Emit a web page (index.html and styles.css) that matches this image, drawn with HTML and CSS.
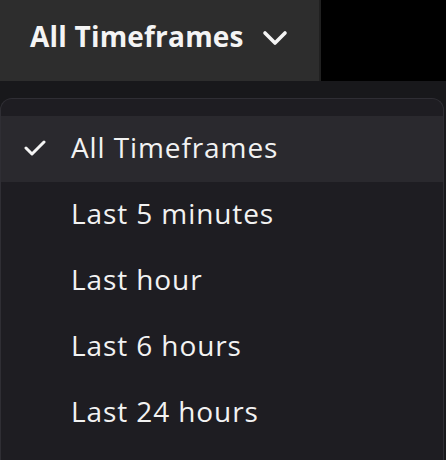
FILE: index.html
```html
<!DOCTYPE html>
<html lang="en">
<head>
    <meta charset="UTF-8">
    <meta name="viewport" content="width=device-width, initial-scale=1.0">
    <title>Timeframe filter</title>
    <link rel="stylesheet" href="styles.css">
</head>
<body>
    <div class="topbar">
        <div class="tf-button">
            <span>All Timeframes</span>
            <svg class="chevron" width="26" height="18" viewBox="0 0 26 18">
                <path d="M3 4 L13 14 L23 4" fill="none" stroke="#f4f4f4" stroke-width="3.6" stroke-linecap="round" stroke-linejoin="round"/>
            </svg>
        </div>
        <div class="topbar-rest"></div>
    </div>

    <div class="menu">
        <div class="item selected">
            <span class="check">
                <svg width="22" height="18" viewBox="0 0 22 18">
                    <path d="M2 9 L8 15 L20 3" fill="none" stroke="#f4f4f4" stroke-width="3" stroke-linecap="round" stroke-linejoin="round"/>
                </svg>
            </span>
            All Timeframes
        </div>
        <div class="item"><span class="check"></span>Last 5 minutes</div>
        <div class="item"><span class="check"></span>Last hour</div>
        <div class="item"><span class="check"></span>Last 6 hours</div>
        <div class="item"><span class="check"></span>Last 24 hours</div>
    </div>
</body>
</html>
```

FILE: styles.css
```css
* {
    box-sizing: border-box;
    padding: 0;
    margin: 0;
}

body {
    font-family: 'Open Sans', 'Noto Sans', sans-serif;
    background-color: #18181b;
    color: #f2f2f2;
    height: 460px;
    overflow: hidden;
}

.topbar {
    display: flex;
    height: 81px;
}

.tf-button {
    width: 321px;
    display: flex;
    align-items: center;
    gap: 18px;
    padding-left: 30px;
    padding-bottom: 9px;
    background-color: #2d2d2d;
    font-size: 28px;
    font-weight: 700;
    letter-spacing: 0.2px;
    color: #f4f4f4;
    border-right: 2px solid #202020;
}

.chevron {
    margin-top: 4px;
}

.topbar-rest {
    flex: 1;
    background-color: #000;
}

.menu {
    margin-top: 17px;
    margin-right: 2px;
    padding-top: 17px;
    height: 362px;
    overflow: hidden;
    background-color: #1e1d22;
    border: 1px solid #2f2e34;
    border-bottom: none;
    border-radius: 12px 12px 0 0;
}

.item {
    height: 66px;
    display: flex;
    align-items: center;
    padding-left: 23px;
    padding-bottom: 4px;
    font-size: 28px;
    letter-spacing: 0.9px;
    color: #f2f2f2;
}

.item.selected {
    background-color: #2a292e;
}

.check {
    width: 47px;
    display: flex;
    align-items: center;
    margin-top: 2px;
}
```
